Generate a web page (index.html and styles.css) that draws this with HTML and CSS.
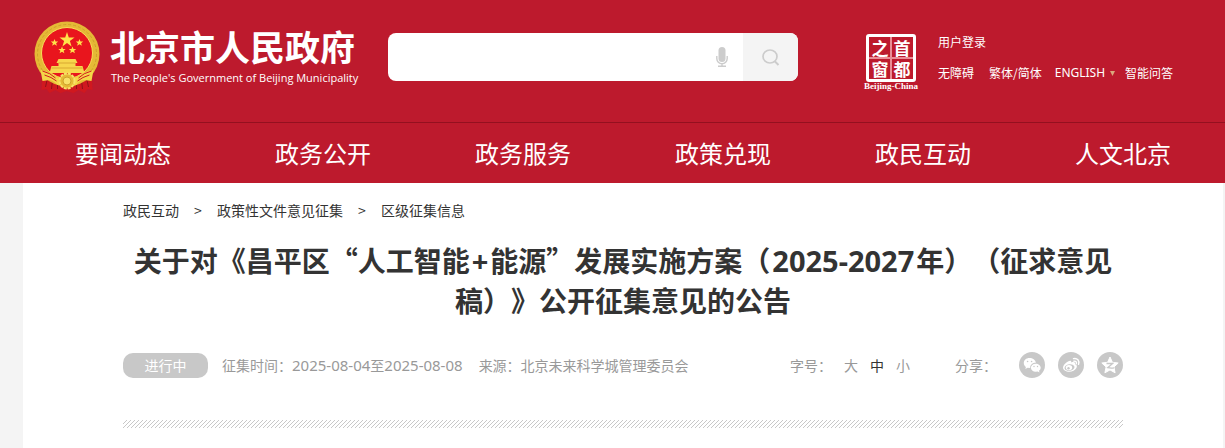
FILE: index.html
```html
<!DOCTYPE html>
<html lang="zh-CN">
<head>
<meta charset="utf-8">
<title>北京市人民政府</title>
<link rel="stylesheet" href="styles.css">
</head>
<body>
<header class="header">
  <div class="wrap masthead">
    <a class="brand" href="#">
      <svg class="emblem" viewBox="0 0 67 72" aria-hidden="true">
        <path d="M9 50 8 69l5-1 3 4 6-3 5 3 6-2 7 2 5-3 6 3 3-4 5 1-1-19z" fill="#d0181f"/>
        <path d="M14 57l-2 9M19 59l-1 9M48 59l1 9M53 57l2 9M24 62v6M43 62v6" stroke="#8f1118"/>
        <circle cx="33.500" cy="33" r="32.500" fill="#e5b936"/>
        <circle cx="33.500" cy="33" r="29.500" fill="none" stroke="#cfa02a" stroke-width="1" stroke-dasharray="3 2"/>
        <circle cx="33.500" cy="32" r="25.500" fill="#e9151d" stroke="#f8df58" stroke-width="1"/>
        <path d="M33.500 11l1.800 5.500h5.700L36.400 20l1.700 5.500-4.600-3.400-4.600 3.400 1.700-5.500-4.600-3.500h5.700z" fill="#ffe34a"/>
        <path id="s" d="M21 18l1 2.500h2.700l-2.100 1.700.8 2.600-2.400-1.500-2.400 1.500.8-2.600-2.100-1.700H20z" fill="#ffe34a"/>
        <use href="#s" x="25"/><use href="#s" x="7.500" y="7.500"/><use href="#s" x="18" y="7.500"/>
        <path d="M25 38h17l2 4h-2v3h7l2 7H16l2-7h7v-3h-2z" fill="#f7d64d"/>
        <path d="M25 42h17M18 47h31" stroke="#d9a832"/>
        <path d="M7 49q8 1 14 6 6 3 12.500 0Q40 58 46 55q6-5 14-6l-2 11-7-1q-5 0-8 5-5 2-9.500-1Q28 65 24 64q-5-5-8-5l-7 1z" fill="#f4d748"/>
        <path d="M9 50q8 2 13 7M11 54q7 2 12 6M58 50q-8 2-13 7M56 54q-7 2-12 6" fill="none" stroke="#d11a20"/>
        <circle cx="33.500" cy="60" r="7.500" fill="#e5b936" stroke="#f8e168" stroke-width="2" stroke-dasharray="3 1"/>
        <circle cx="33.500" cy="60" r="4" fill="#f8e168" stroke="#cfa02a"/>
      </svg>
      <span class="brand-text">
        <span class="brand-cn">北京市人民政府</span>
        <span class="brand-en">The People's Government of Beijing Municipality</span>
      </span>
    </a>
    <form class="search" role="search">
      <input class="search-input" type="text" aria-label="搜索">
      <button class="mic" type="button" aria-label="语音输入">
        <svg width="12" height="20" viewBox="0 0 12 20"><rect x="2.500" y="0" width="7" height="15" rx="3.500" fill="#ccc"/><path d="M.8 9v2.500a5.200 5.200 0 0 0 10.400 0V9M6 16.500V19M2 19.300h8" fill="none" stroke="#ccc" stroke-width="1.400"/></svg>
      </button>
      <button class="search-button" type="submit" aria-label="提交搜索">
        <svg width="18" height="17" viewBox="0 0 18 17"><ellipse cx="8" cy="7.500" rx="7" ry="6.500" fill="none" stroke="#ccc" stroke-width="1.700"/><path d="M12.500 12l4 4" stroke="#ccc" stroke-width="2"/></svg>
      </button>
    </form>
    <a class="seal" href="#">
      <span class="seal-grid"><span>之</span><span>首</span><span>窗</span><span>都</span></span>
      <span class="seal-en">Beijing-China</span>
    </a>
    <div class="tools">
      <div class="tools-row"><a href="#">用户登录</a></div>
      <div class="tools-row">
        <a href="#">无障碍</a><a href="#">繁体/简体</a><a class="lang" href="#">ENGLISH<svg class="caret" width="5" height="5" viewBox="0 0 5 5" aria-hidden="true"><path d="M0 0h5L2.500 5z" fill="#dba77c"/></svg></a><a href="#">智能问答</a>
      </div>
    </div>
  </div>
  <nav class="nav">
    <div class="wrap nav-list">
      <a href="#">要闻动态</a><a href="#">政务公开</a><a href="#">政务服务</a><a href="#">政策兑现</a><a href="#">政民互动</a><a href="#">人文北京</a>
    </div>
  </nav>
</header>
<main class="wrap page">
  <nav class="crumbs" aria-label="当前位置"><a href="#">政民互动</a><span>&gt;</span><a href="#">政策性文件意见征集</a><span>&gt;</span><a href="#">区级征集信息</a></nav>
  <h1 class="title">关于对《昌平区“人工智能<span class="title-num">+</span>能源”发展实施方案（<span class="title-num">2025-2027</span>年）（征求意见稿）》公开征集意见的公告</h1>
  <div class="meta">
    <span class="status">进行中</span>
    <span class="period">征集时间：<span class="date">2025-08-04</span>至<span class="date">2025-08-08</span></span>
    <span class="source">来源：北京未来科学城管理委员会</span>
    <div class="sizes"><span class="sizes-label">字号：</span><button type="button">大</button><button class="current" type="button">中</button><button type="button">小</button></div>
    <div class="share"><span class="share-label">分享：</span>
      <a href="#" aria-label="微信"><svg viewBox="0 0 26 26"><circle cx="13" cy="13" r="13" fill="#c8c8c8"/><path d="M10.500 6C7 6 4.800 8.200 4.800 11c0 1.600.8 3 2.100 3.900l-.6 2 2.300-1.200 2.600.3c-.2-3.300 2.500-5.300 5.700-5.200C16.400 7.800 13.700 6 10.500 6z" fill="#fff"/><path d="M16.800 11.700c-3 0-4.900 1.900-4.900 4s2 4 4.900 4l1.800-.3 1.900 1-.5-1.700c1.100-.8 1.700-1.800 1.700-3 0-2.200-2.200-4-4.900-4z" fill="#fff"/><g fill="#c8c8c8"><circle cx="8.600" cy="9.500" r=".8"/><circle cx="12.600" cy="9.500" r=".8"/><circle cx="15" cy="14.500" r=".7"/><circle cx="18.500" cy="14.500" r=".7"/></g></svg></a>
      <a href="#" aria-label="微博"><svg viewBox="0 0 26 26"><circle cx="13" cy="13" r="13" fill="#c8c8c8"/><path d="M10 9.500c2-1.200 3.500-1 3.300 1 2-.9 4.300-.6 3.700 1.800 2 .6 2.400 2 1.400 3.800-1.200 2.200-4 3.700-7.100 3.700-3.500 0-6.300-1.600-6.300-4.200 0-2 2.300-4.800 5-6.100z" fill="#fff"/><ellipse cx="11.500" cy="15.500" rx="5" ry="3.300" fill="#c8c8c8" transform="rotate(-8 11.500 15.500)"/><ellipse cx="11" cy="15.600" rx="3.200" ry="2.700" fill="#fff"/><circle cx="10.500" cy="16.200" r="1.200" fill="#c8c8c8"/><path d="M15.500 6.600c3.800-.9 6.300 2.200 5 5.800M15.900 9.200c1.900-.4 3 1 2.400 2.600" fill="none" stroke="#fff" stroke-width="1.400" stroke-linecap="round"/></svg></a>
      <a href="#" aria-label="QQ空间"><svg viewBox="0 0 26 26"><circle cx="13" cy="13" r="13" fill="#c8c8c8"/><path d="M13 5l2.400 5.300 5.800.7-4.300 4 1.200 5.800-5.100-2.900-5.100 2.900L9.100 15l-4.300-4 5.800-.7z" fill="#fff" stroke="#fff" stroke-linejoin="round"/><path d="M9.500 11.500h6.200l-5 4.200q3 .8 6.300.2" fill="none" stroke="#c8c8c8" stroke-width="1.300"/></svg></a>
    </div>
  </div>
  <div class="divider"></div>
</main>
</body>
</html>
```
FILE: styles.css
```css
* { box-sizing: border-box; }
body {
  margin: 0;
  min-height: 100vh;
  display: flex;
  flex-direction: column;
  background: #f4f4f4;
  color: #333;
  font: 14px/20px "Noto Sans CJK SC", sans-serif;
  text-spacing-trim: space-all;
}
a { color: inherit; text-decoration: none; }
button { border: 0; padding: 0; background: none; color: inherit; font: inherit; cursor: pointer; }
svg { display: block; }
.wrap { margin: 0 2px 0 23px; }

.header { background: #bd1a2d; color: #fff; }
.masthead { display: flex; align-items: flex-start; padding: 21px 0 29px 10px; }
.brand { display: flex; width: 355px; flex: none; }
.emblem { width: 68px; height: 72px; margin-right: 9px; }
.brand-text { display: flex; flex-direction: column; padding-top: 3px; white-space: nowrap; }
.brand-cn { font-size: 35px; line-height: 44px; font-weight: 700; }
.brand-en { padding-left: 1px; font: 11px/20px "Open Sans", sans-serif; }
.search { display: flex; flex: none; width: 410px; height: 48px; margin-top: 12px; background: #fff; border-radius: 8px; overflow: hidden; }
.search-input { flex: 1; min-width: 0; border: 0; padding: 0 16px; background: none; font: inherit; outline: 0; }
.mic { display: grid; place-items: center; width: 42px; }
.search-button { display: grid; place-items: center; width: 55px; background: #f4f4f4; }
.seal { display: flex; flex-direction: column; align-items: center; flex: none; width: 56px; margin: 13px 0 0 65px; }
.seal-grid {
  display: grid; grid-template-columns: 1fr 1fr; grid-template-rows: 1fr 1fr;
  width: 50px; height: 48px; border: 3px solid #fff; border-radius: 3px;
  background: linear-gradient(#e98d96, #e98d96) center / 2px 100% no-repeat, linear-gradient(#e98d96, #e98d96) center / 100% 2px no-repeat;
}
.seal-grid span { display: grid; place-items: center; font-size: 17px; line-height: 20px; font-weight: 700; }
.seal-en { font: bold 9px/9px "Liberation Serif", serif; white-space: nowrap; }
.tools { margin-left: 19px; padding-top: 12px; font: 12px/18px "Noto Sans CJK SC", sans-serif; white-space: nowrap; }
.tools-row { display: flex; }
.tools-row + .tools-row { margin-top: 13px; }
.tools-row a { margin-right: 15px; }
.tools-row .lang { display: flex; align-items: center; margin: 0 10px 0 -2px; font-family: "Noto Sans", sans-serif; }
.caret { margin-left: 5px; }
.nav { border-top: 1px solid #94101f; }
.nav-list { display: grid; grid-template-columns: repeat(6, 1fr); }
.nav-list a { font-size: 24px; line-height: 60px; text-align: center; }

.page { flex: 1; padding: 17px 100px 0; background: #fff; }
.crumbs { display: flex; }
.crumbs span { width: 38px; text-align: center; }
.title { margin: 20px 0 0; font-size: 28px; line-height: 40px; font-weight: 700; text-align: center; }
.title-num { padding: 0 2px; font-family: "Noto Sans", sans-serif; font-size: 29px; line-height: 30px; }
.meta { display: flex; align-items: center; margin-top: 32px; color: #999; white-space: nowrap; }
.status { width: 85px; border-radius: 10px; background: #c8c8c8; color: #fff; line-height: 25px; text-align: center; }
.period { margin-left: 14px; }
.date { font-family: "Noto Sans", sans-serif; font-size: 15px; line-height: 20px; }
.source { margin-left: 16px; }
.sizes { display: flex; margin-left: auto; }
.sizes-label { margin-right: 12px; }
.sizes button { margin-right: 12px; }
.sizes .current { color: #333; }
.share { display: flex; align-items: center; gap: 13px; margin-left: 33px; }
.share-label { margin-right: 9px; }
.share svg { width: 26px; height: 26px; }
.divider { height: 8px; margin-top: 42px; background: linear-gradient(135deg, #fff 40%, #c8c8c8 41% 60%, #fff 61%) 0 0 / 4px 4px; }
```
